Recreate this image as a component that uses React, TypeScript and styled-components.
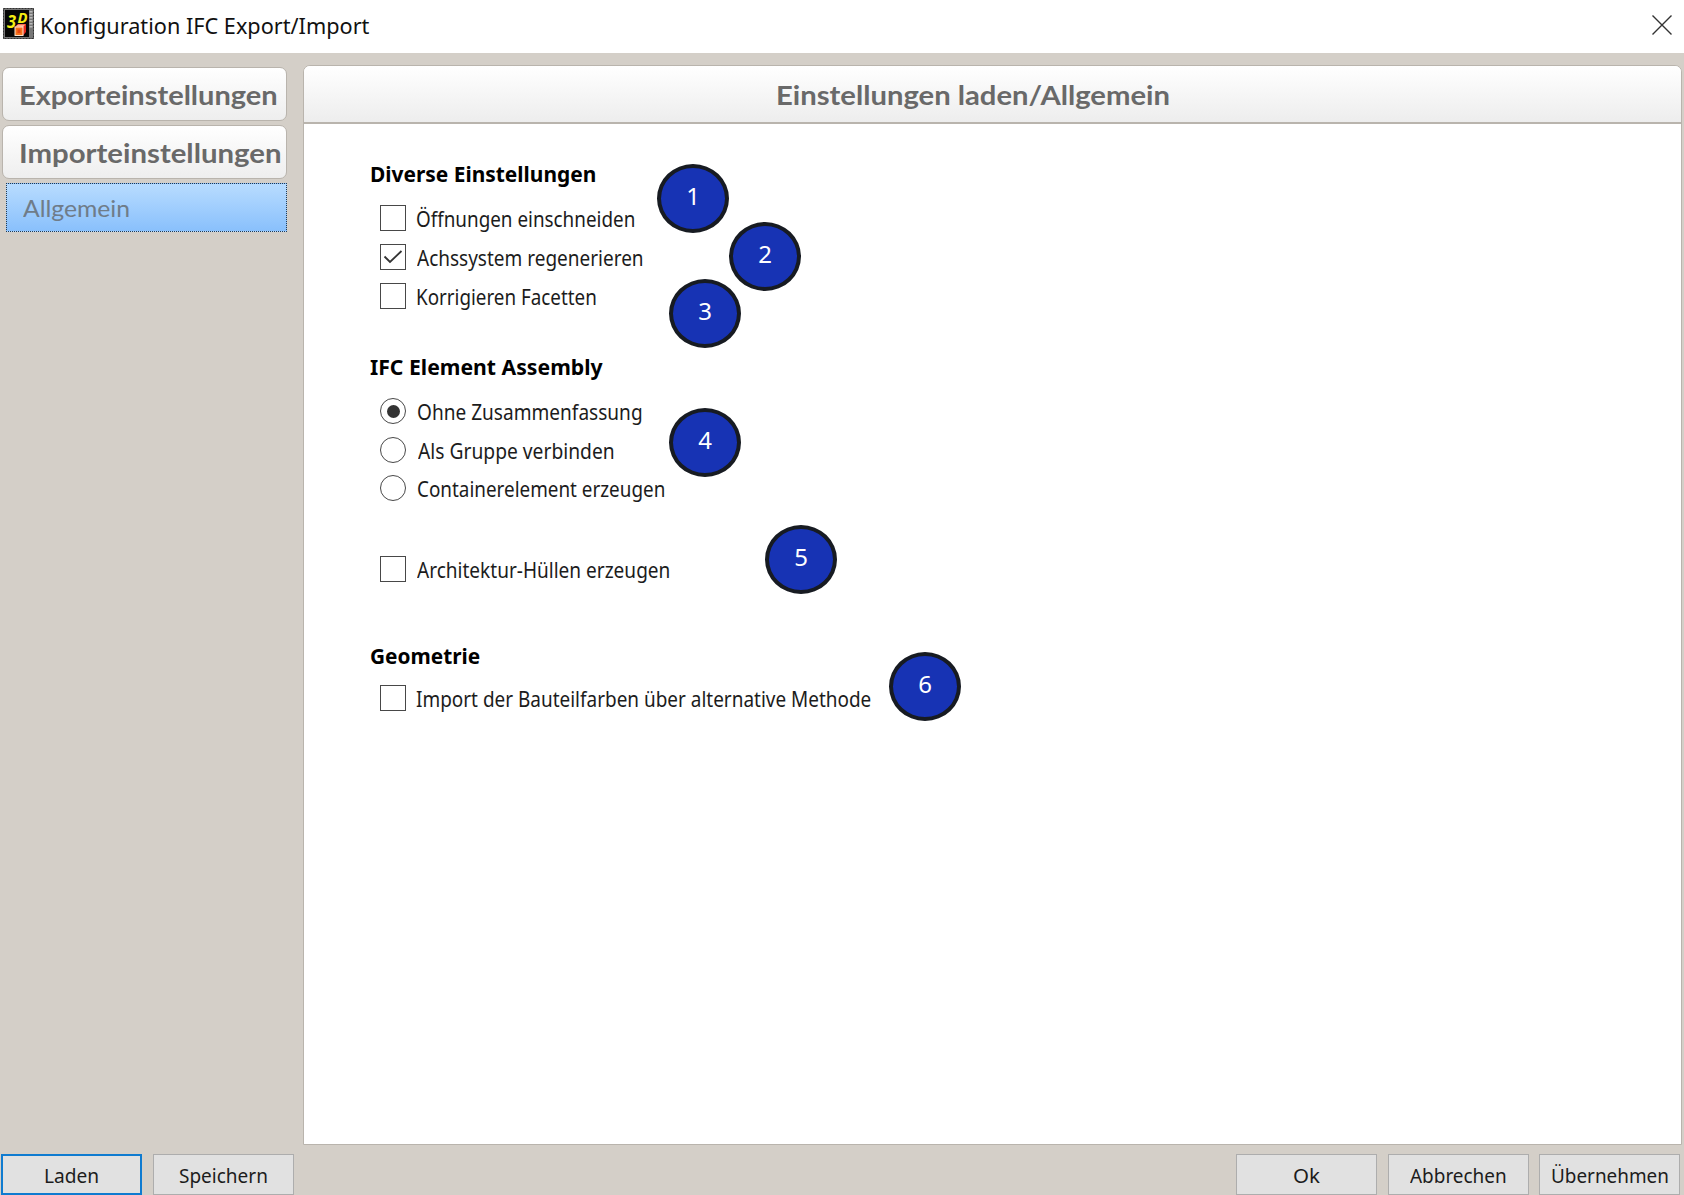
import React, { useLayoutEffect, useRef, useState } from 'react';
import styled, { createGlobalStyle, css } from 'styled-components';

const uiFont = '"Noto Sans", "Open Sans", sans-serif';
const headFont = 'Lato, "Noto Sans", sans-serif';

const GlobalStyle = createGlobalStyle`
  *, *::before, *::after { box-sizing: border-box; }
  body { margin: 0; background: #d4cfc8; overflow: hidden; }
`;

const Dialog = styled.div`
  position: relative;
  display: flex;
  flex-direction: column;
  width: 1684px;
  height: 1195px;
  background: #d4cfc8;
  font-family: ${uiFont};
  color: #1c1c1c;
  overflow: hidden;
`;

const TitleBar = styled.header`
  display: flex;
  align-items: center;
  height: 53px;
  padding: 0 12px 6px 3px;
  background: #fff;
`;

const IconSvg = styled.svg`
  display: block;
  overflow: visible;
`;

const TitleText = styled.div`
  flex: 1;
  padding: 2px 0 0 6px;
  font-size: 22px;
  line-height: 30px;
  color: #111;
`;

const CloseButton = styled.button`
  display: flex;
  padding: 2px 0 0;
  border: 0;
  background: none;
`;

const Main = styled.div`
  display: flex;
  flex: 1;
  min-height: 0;
  padding: 12px 2px 0 2px;
`;

const Sidebar = styled.nav`
  display: flex;
  flex-direction: column;
  width: 285px;
  padding-top: 2px;
`;

const SectionButton = styled.button`
  display: flex;
  align-items: center;
  height: 54px;
  margin-bottom: 4px;
  padding: 0 0 0 16px;
  border: 1px solid #b9b4ad;
  border-radius: 7px;
  background: linear-gradient(#ffffff, #eeeeee);
  font: 700 27px ${headFont};
  color: #696969;
  text-align: left;
`;

const ActiveItem = styled.button`
  display: flex;
  align-items: center;
  height: 49px;
  margin-left: 4px;
  padding: 0 0 0 16px;
  border: 1px dotted #243a50;
  background: linear-gradient(#b8dcff, #89c0fc);
  font: 400 24px ${headFont};
  color: #6f7c89;
  text-align: left;
`;

const Panel = styled.section`
  display: flex;
  flex-direction: column;
  flex: 1;
  margin-left: 16px;
  border: 1px solid #b9b4ad;
  border-radius: 7px 7px 0 0;
  background: #fff;
  overflow: hidden;
`;

const PanelHeader = styled.div`
  display: flex;
  align-items: center;
  justify-content: center;
  height: 58px;
  padding: 0 40px 0 0;
  border-bottom: 2px solid #b9b4ad;
  background: linear-gradient(#ffffff, #ededed);
  font: 700 27px ${headFont};
  color: #696969;
`;

const PanelBody = styled.div`
  padding: 37px 0 0 66px;
  font-size: 21px;
  line-height: 26px;
`;

const Group = styled.section<{ $after?: number }>`
  display: flex;
  flex-direction: column;
  margin-bottom: ${(p) => p.$after ?? 0}px;
`;

const GroupTitle = styled.h2<{ $gap?: number }>`
  margin: 0 0 ${(p) => p.$gap ?? 18}px;
  font-size: 21px;
  line-height: 26px;
  font-weight: 700;
  color: #000;
`;

const Options = styled.div<{ $gap: number }>`
  display: flex;
  flex-direction: column;
  gap: ${(p) => p.$gap}px;
  padding-left: 10px;
`;

const OptionRow = styled.label`
  display: flex;
  align-items: center;
  height: 26px;
`;

const OptionText = styled.span<{ $indent: number; $drop?: number }>`
  padding: ${(p) => (p.$drop ?? 0) * 2}px 0 0 ${(p) => p.$indent}px;
`;

const Mark = styled.span<{ $round?: boolean }>`
  display: flex;
  align-items: center;
  justify-content: center;
  flex: none;
  width: 26px;
  height: 26px;
  border: 1.5px solid #484848;
  background: #fff;
  ${(p) => p.$round && css`border-radius: 50%;`}
`;

const Dot = styled.span`
  width: 13px;
  height: 13px;
  border-radius: 50%;
  background: #333;
`;

const CheckSvg = styled.svg`
  display: block;
  flex: none;
`;

const Footer = styled.footer`
  display: flex;
  gap: 10.5px;
  height: 50px;
  padding: 9px 4px 0 1px;
`;

const Spacer = styled.div`
  flex: 1;
`;

const PushButton = styled.button<{ $primary?: boolean }>`
  display: flex;
  align-items: center;
  justify-content: center;
  width: 141px;
  height: 41px;
  padding: 1px 0 0;
  border: ${(p) => (p.$primary ? '2px solid #0f7bd0' : '1px solid #adadad')};
  background: #e1e1e1;
  font: 400 20.5px ${uiFont};
  color: #1c1c1c;
`;

const Badge = styled.div<{ $x: number; $y: number }>`
  position: absolute;
  left: ${(p) => p.$x}px;
  top: ${(p) => p.$y}px;
  display: flex;
  align-items: center;
  justify-content: center;
  width: 72px;
  height: 69px;
  padding-bottom: 5px;
  border: 4px solid #171b22;
  border-radius: 50%;
  background: #1733b4;
  font-size: 24px;
  line-height: 30px;
  color: #fff;
`;

const FitOuter = styled.span`
  display: inline-block;
  white-space: nowrap;
`;

const FitInner = styled.span`
  display: inline-block;
  transform-origin: 0 50%;
`;

/** Text squeezed horizontally to the advance width of the dialog's native font. */
function Fit({ width, children }: { width: number; children: string }) {
  const ref = useRef<HTMLSpanElement>(null);
  const [scale, setScale] = useState(1);
  useLayoutEffect(() => {
    if (ref.current) setScale(width / ref.current.offsetWidth);
  }, [width, children]);
  return (
    <FitOuter style={{ width }}>
      <FitInner ref={ref} style={{ transform: `scaleX(${scale})` }}>{children}</FitInner>
    </FitOuter>
  );
}

function AppIcon() {
  return (
    <IconSvg width="31" height="31" viewBox="0 0 31 31">
      <rect width="31" height="31" fill="#777" />
      <rect x="0.5" y="0.5" width="30" height="30" fill="none" stroke="#333" strokeDasharray="2 1" />
      <rect x="2" y="2" width="24" height="27" fill="#060606" />
      <path d="M28 3v17" stroke="#bbb" strokeWidth="3" strokeDasharray="1.5 1.5" />
      <g fill="#f6ee12" fontFamily={uiFont} fontWeight="700" fontStyle="italic">
        <text x="4" y="19.500" fontSize="18" textLength="9" lengthAdjust="spacingAndGlyphs">3</text>
        <text x="14.500" y="14.500" fontSize="15" textLength="10" lengthAdjust="spacingAndGlyphs">D</text>
      </g>
      <path d="M12 19l3-3h8v8l-3 3.500z" fill="#e5281b" />
      <path d="M12.500 18.500l2.500-2h7.500l-2.500 2.500z" fill="#ffb08c" />
      <rect x="12" y="19" width="8" height="8.500" fill="#f5721d" stroke="#fde3cf" />
      <path d="M14.500 21.500h3v3.500h-3z" fill="#e8440f" />
    </IconSvg>
  );
}

type OptionProps = { label: string; width: number; radio?: boolean; on?: boolean; indent?: number; drop?: number };

function Option({ label, width, radio, on, indent = 10, drop = 1 }: OptionProps) {
  return (
    <OptionRow>
      <Mark $round={radio}>
        {on && radio && <Dot />}
        {on && !radio && (
          <CheckSvg width="20" height="16" viewBox="0 0 20 16">
            <path d="M1.500 7.500l5.500 5.500L18.500 2" fill="none" stroke="#333" strokeWidth="1.800" />
          </CheckSvg>
        )}
      </Mark>
      <OptionText $indent={indent} $drop={drop}>
        <Fit width={width}>{label}</Fit>
      </OptionText>
    </OptionRow>
  );
}

const badges = [
  { x: 657, y: 164 },
  { x: 729, y: 222 },
  { x: 669, y: 279 },
  { x: 669, y: 408 },
  { x: 765, y: 525 },
  { x: 889, y: 652 },
];

export default function App() {
  return (
    <>
      <GlobalStyle />
      <Dialog>
        <TitleBar>
          <AppIcon />
          <TitleText><Fit width={329}>Konfiguration IFC Export/Import</Fit></TitleText>
          <CloseButton aria-label="Schließen">
            <svg width="20" height="20" viewBox="0 0 20 20">
              <path d="M0.500 0.500l19 19M19.500 0.500l-19 19" stroke="#333" strokeWidth="1.400" />
            </svg>
          </CloseButton>
        </TitleBar>
        <Main>
          <Sidebar>
            <SectionButton><Fit width={259}>Exporteinstellungen</Fit></SectionButton>
            <SectionButton><Fit width={263}>Importeinstellungen</Fit></SectionButton>
            <ActiveItem><Fit width={107}>Allgemein</Fit></ActiveItem>
          </Sidebar>
          <Panel>
            <PanelHeader><Fit width={394}>Einstellungen laden/Allgemein</Fit></PanelHeader>
            <PanelBody>
              <Group $after={45}>
                <GroupTitle><Fit width={226}>Diverse Einstellungen</Fit></GroupTitle>
                <Options $gap={13}>
                  <Option label="Öffnungen einschneiden" width={219} />
                  <Option on label="Achssystem regenerieren" width={227} indent={11} />
                  <Option label="Korrigieren Facetten" width={181} />
                </Options>
              </Group>
              <Group $after={55}>
                <GroupTitle><Fit width={233}>IFC Element Assembly</Fit></GroupTitle>
                <Options $gap={12.5}>
                  <Option radio on label="Ohne Zusammenfassung" width={226} indent={11} />
                  <Option radio label="Als Gruppe verbinden" width={197} indent={12} />
                  <Option radio label="Containerelement erzeugen" width={248} indent={11} />
                </Options>
              </Group>
              <Group $after={61}>
                <Options $gap={0}>
                  <Option label="Architektur-Hüllen erzeugen" width={253} indent={11} />
                </Options>
              </Group>
              <Group>
                <GroupTitle $gap={16}><Fit width={110}>Geometrie</Fit></GroupTitle>
                <Options $gap={0}>
                  <Option label="Import der Bauteilfarben über alternative Methode" width={455} />
                </Options>
              </Group>
            </PanelBody>
          </Panel>
        </Main>
        <Footer>
          <PushButton $primary><Fit width={55}>Laden</Fit></PushButton>
          <PushButton><Fit width={89}>Speichern</Fit></PushButton>
          <Spacer />
          <PushButton><Fit width={27}>Ok</Fit></PushButton>
          <PushButton><Fit width={97}>Abbrechen</Fit></PushButton>
          <PushButton><Fit width={118}>Übernehmen</Fit></PushButton>
        </Footer>
        {badges.map((b, i) => (
          <Badge key={i} $x={b.x} $y={b.y}>{i + 1}</Badge>
        ))}
      </Dialog>
    </>
  );
}
